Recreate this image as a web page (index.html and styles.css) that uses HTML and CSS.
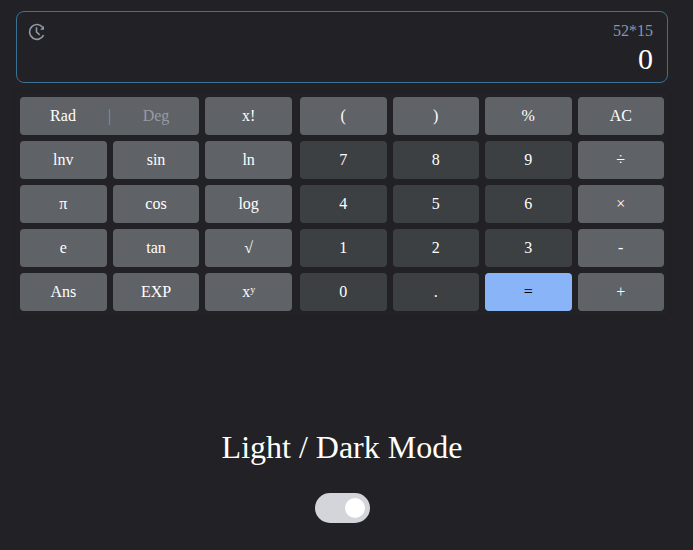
FILE: index.html
```
<!DOCTYPE html>
<html lang="en">
<head>
<meta charset="utf-8">
<title>Calculator</title>
<link rel="stylesheet" href="styles.css">
</head>
<body>
<main class="calculator">
  <section class="display">
    <svg class="history" viewBox="0 0 20 20" fill="none" stroke="#9299a6" stroke-width="1.6"><path d="M16.6 13.2A7.4 7.4 0 1 1 15.8 5.4"/><path d="M9.5 5.3V10l3.2 2.8"/><path d="M17 3.9v3.8h-4z" fill="#9299a6" stroke="none"/></svg>
    <div class="values">
      <div class="expression">52*15</div>
      <div class="result">0</div>
    </div>
  </section>
  <section class="keys">
    <div class="pad functions">
      <button class="angle"><span>Rad</span><span class="bar">|</span><span class="off">Deg</span></button><button>x!</button>
      <button>lnv</button><button>sin</button><button>ln</button>
      <button>π</button><button>cos</button><button>log</button>
      <button>e</button><button>tan</button><button>√</button>
      <button>Ans</button><button>EXP</button><button>x<sup>y</sup></button>
    </div>
    <div class="pad numbers">
      <button>(</button><button>)</button><button>%</button><button>AC</button>
      <button class="num">7</button><button class="num">8</button><button class="num">9</button><button>÷</button>
      <button class="num">4</button><button class="num">5</button><button class="num">6</button><button>×</button>
      <button class="num">1</button><button class="num">2</button><button class="num">3</button><button>-</button>
      <button class="num">0</button><button class="num">.</button><button class="equals">=</button><button>+</button>
    </div>
  </section>
</main>
<section class="mode">
  <h1>Light / Dark Mode</h1>
  <div class="switch"><span class="knob"></span></div>
</section>
</body>
</html>
```
FILE: styles.css
```
* { box-sizing: border-box; }
body {
  margin: 0;
  height: 550px;
  overflow: hidden;
  background: #222125;
  color: #fff;
  font-family: "Liberation Serif", "Times New Roman", serif;
}
.calculator { width: 652px; margin: 11px 0 0 16px; }
.display {
  height: 72px;
  display: flex;
  justify-content: space-between;
  border: 1px solid #3c7095;
  border-radius: 8px;
  padding: 10px 14px 0 10px;
}
.history { width: 20px; height: 20px; }
.values { text-align: right; }
.expression { font-size: 16px; line-height: 18px; color: #8795b3; }
.result { font-size: 30px; line-height: 38px; }
.keys {
  display: flex;
  margin-top: 10px;
  box-shadow: 0 0 6px rgba(0, 0, 0, .08);
}
.pad { display: grid; gap: 6px; grid-auto-rows: 38px; padding: 4px; }
.functions { width: 280px; grid-template-columns: repeat(3, 1fr); }
.numbers { width: 372px; grid-template-columns: repeat(4, 1fr); }
button {
  border: 0;
  border-radius: 4px;
  padding: 0;
  background: #5f6368;
  color: #fff;
  font: 16px/20px "Liberation Serif", "Times New Roman", serif;
}
.num { background: #3c4043; }
.equals { background: #8ab4f8; color: #000; }
.angle {
  grid-column: span 2;
  display: grid;
  grid-template-columns: 86px 7px 86px;
  align-items: center;
}
.bar { color: #6499c6; }
.off { color: #969ba1; }
sup { font-size: 10px; line-height: 0; vertical-align: 4px; }
.mode {
  width: 652px;
  margin: 114px 0 0 16px;
  display: flex;
  flex-direction: column;
  align-items: center;
}
h1 { margin: 0; font-size: 32px; line-height: 36px; font-weight: 400; }
.switch {
  width: 55px;
  height: 30px;
  margin-top: 28px;
  padding: 5px;
  border-radius: 15px;
  background: #d4d5db;
  display: flex;
  justify-content: flex-end;
}
.knob { width: 20px; height: 20px; border-radius: 50%; background: #fff; }
```
